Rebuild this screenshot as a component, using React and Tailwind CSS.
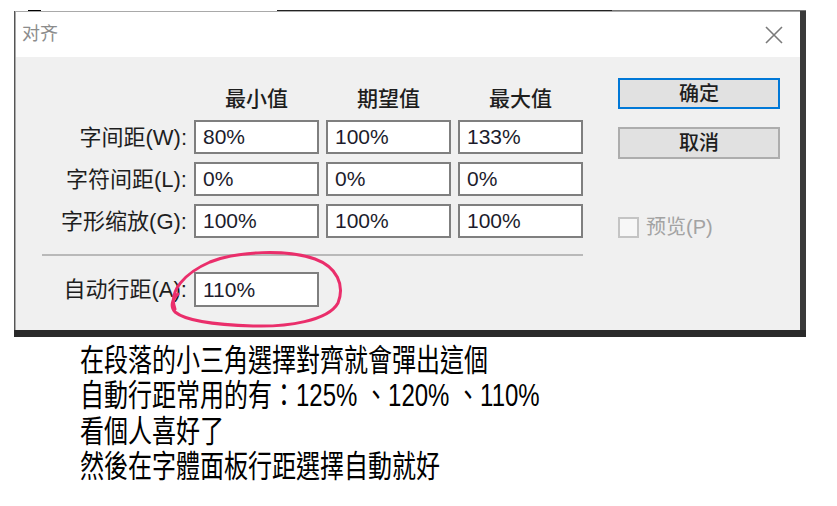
import React from 'react';

const cjk = { fontFamily: '"Liberation Sans", "Noto Sans CJK SC", sans-serif' };
const cjkTc = { fontFamily: '"Liberation Sans", "Noto Sans CJK TC", sans-serif' };

const rows = [
    { label: '字间距(W):', values: ['80%', '100%', '133%'] },
    { label: '字符间距(L):', values: ['0%', '0%', '0%'] },
    { label: '字形缩放(G):', values: ['100%', '100%', '100%'] },
];

const Box = ({ value }) => (
    <div className="w-[125px] h-[34px] border-2 border-[#7f7f7f] bg-white flex items-center pl-[7px] text-[21px] text-[#1c1c2c]">
        {value}
    </div>
);

const Dialog = () => (
    <div className="w-[785px] h-[319px] flex flex-col border-t border-l border-[#a9a9a9]" style={cjk}>
        {/* title bar */}
        <div className="h-[45px] bg-white flex items-center justify-between pl-[6px] pr-[17px]">
            <span className="text-[18px] text-[#8c8c8c]">对齐</span>
            <svg width="18" height="18" viewBox="0 0 18 18">
                <path d="M1 1 L17 17 M17 1 L1 17" stroke="#7a7a7a" strokeWidth="1.6" fill="none" />
            </svg>
        </div>

        {/* body */}
        <div className="flex-1 bg-[#f0f0f0] flex">
            <div className="flex flex-col pt-[28px]">
                <div className="flex gap-[7px] h-[28px] items-center">
                    <div className="w-[171px]" />
                    {['最小值', '期望值', '最大值'].map((h) => (
                        <div key={h} className="w-[125px] text-center text-[21px] font-medium text-[#1e1e1e]">{h}</div>
                    ))}
                </div>
                <div className="flex flex-col gap-[8px] mt-[7px]">
                    {rows.map((r) => (
                        <div key={r.label} className="flex gap-[7px] items-center">
                            <div className="w-[171px] text-right text-[22px] text-[#1e1e1e]">{r.label}</div>
                            {r.values.map((v, i) => (
                                <Box key={i} value={v} />
                            ))}
                        </div>
                    ))}
                </div>
                <div className="ml-[26px] w-[541px] h-[2px] bg-[#b9b9b9] mt-[16px]" />
                <div className="flex gap-[7px] items-center mt-[16px]">
                    <div className="w-[171px] text-right text-[22px] text-[#1e1e1e]">自动行距(A):</div>
                    <div className="w-[125px] h-[35px] border-2 border-[#7f7f7f] bg-white flex items-center pl-[7px] text-[21px] text-[#1c1c2c]">
                        110%
                    </div>
                </div>
            </div>

            <div className="ml-[35px] w-[162px] flex flex-col pt-[21px]">
                <button className="h-[31px] border-2 border-[#0078d7] bg-[#e1e1e1] text-[20px] font-medium text-[#1e1e1e] flex items-center justify-center">
                    确定
                </button>
                <button className="h-[32px] mt-[18px] border-2 border-[#adadad] bg-[#e1e1e1] text-[20px] font-medium text-[#1e1e1e] flex items-center justify-center">
                    取消
                </button>
                <div className="flex items-center mt-[53px] gap-[7px]">
                    <div className="w-[21px] h-[21px] border-2 border-[#c4c4c4] bg-[#f7f7f7]" />
                    <span className="text-[20px] text-[#a3a3a3]">预览(P)</span>
                </div>
            </div>
        </div>
    </div>
);

export default function App() {
    return (
        <div className="w-[837px] h-[506px] bg-white relative overflow-hidden">
            {/* screenshot frame */}
            <div className="ml-[14px] pt-[10px] w-[792px]">
                <div className="h-px flex">
                    <div className="w-[14px]" />
                    <div className="w-[13px] bg-black" />
                    <div className="w-[236px]" />
                    <div className="w-[335px] bg-[#222]" />
                    <div className="flex-1 bg-[#777]" />
                </div>
                <div className="flex">
                    <div className="w-px bg-[#555]" />
                    <Dialog />
                    <div className="w-[6px] bg-[#3a3a3a]" />
                </div>
                <div className="h-[7px] bg-[#2a2a2a]" />
            </div>

            {/* red hand-drawn circle */}
            <svg className="absolute left-[165px] top-[245px]" width="185" height="90" viewBox="0 0 185 90">
                <path
                    d="M10 64 C 3 46, 20 28, 45 17 C 72 6, 122 4, 150 14 C 172 22, 180 40, 173 58 C 163 76, 122 82, 88 81 C 56 80, 22 77, 10 67 C 5 62, 7 54, 13 49"
                    stroke="#ea2e6b"
                    strokeWidth="3"
                    fill="none"
                    strokeLinecap="round"
                />
            </svg>

            {/* caption */}
            <div className="ml-[80px] mt-[5px] origin-top scale-y-[1.3] text-[24px] leading-[27.3px] text-black" style={cjkTc}>
                <div>在段落的小三角選擇對齊就會彈出這個</div>
                <div>自動行距常用的有：125% 、120% 、110%</div>
                <div>看個人喜好了</div>
                <div>然後在字體面板行距選擇自動就好</div>
            </div>
        </div>
    );
}
